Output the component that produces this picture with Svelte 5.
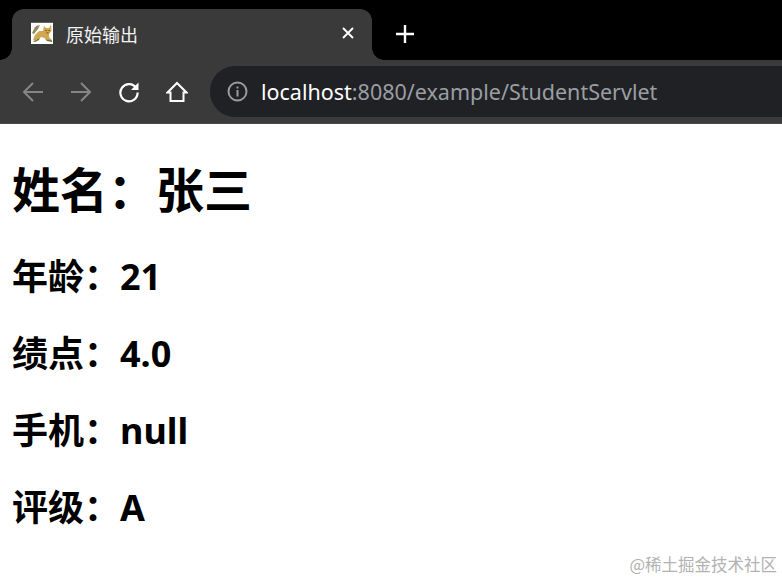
<script>
  const rows = ['年龄：21', '绩点：4.0', '手机：null', '评级：A'];
</script>

<div class="browser">
  <div class="tabstrip">
    <div class="tab">
      <svg class="favicon" width="22" height="22" viewBox="0 0 22 22">
        <rect width="22" height="22" fill="#fff" />
        <path d="M0 0 H22 V.8 H0 Z" fill="#3c3a34" />
        <path d="M2 18 L4 13 L8 9 L12 9 L13 4 L15 6 L18 6 L20 2.500 L20.500 9 L18 12 L18 15 L21 18 L20 19 L15 17 L11 15 L8 16 L4 19 Z" fill="#d3a650" />
        <path d="M1 11 L3 7 L6 4 L9 3 L7 7 L3 12 Z" fill="#86915f" />
        <path d="M3 6 L7 3 L5 7 Z" fill="#c9694a" />
        <path d="M2 20 L9 15.500 L8 18 L4 20 Z M14 17 L21 18.500 L21 20 L16 19 Z" fill="#66733c" />
        <path d="M14.500 8 h1.200 v1 h-1.200 Z M17.500 8 h1.200 v1 h-1.200 Z M15.500 10.500 h2 v.8 h-2 Z" fill="#4d3b1c" />
      </svg>
      <span class="title">原始输出</span>
      <svg class="close" width="12" height="12" viewBox="0 0 12 12">
        <path d="M1 1 L11 11 M11 1 L1 11" stroke="#fff" stroke-width="1.9" />
      </svg>
    </div>
    <svg class="plus" width="18" height="18" viewBox="0 0 18 18">
      <path d="M9 0 V18 M0 9 H18" stroke="#fff" stroke-width="2.4" />
    </svg>
  </div>
  <div class="toolbar">
    <div class="navs">
      <svg width="22" height="20" viewBox="0 0 22 20"><path d="M21 10 H2 M11 1 L2 10 L11 19" fill="none" stroke="#858687" stroke-width="2" /></svg>
      <svg width="22" height="20" viewBox="0 0 22 20"><path d="M1 10 H20 M11 1 L20 10 L11 19" fill="none" stroke="#858687" stroke-width="2" /></svg>
      <svg width="22" height="22" viewBox="0 0 22 22"><path d="M18.200 7 A8.600 8.600 0 1 0 19.600 11.500" fill="none" stroke="#fff" stroke-width="2.200" /><path d="M20.500 1.500 V9 H13 Z" fill="#fff" /></svg>
      <svg width="22" height="22" viewBox="0 0 22 22"><path d="M11 2 L20.500 11.500 H17.500 V20 H4.500 V11.500 H1.500 Z" fill="none" stroke="#fff" stroke-width="2" /></svg>
    </div>
    <div class="omnibox">
      <svg width="21" height="21" viewBox="0 0 21 21">
        <circle cx="10.500" cy="10.500" r="9" fill="none" stroke="#9a9b9d" stroke-width="2" />
        <path d="M10.500 9 V15.500 M10.500 5.500 V7.500" stroke="#9a9b9d" stroke-width="2" />
      </svg>
      <span class="url"><b>localhost</b>:8080/example/StudentServlet</span>
    </div>
  </div>
</div>

<main>
  <h1>姓名：张三</h1>
  {#each rows as row}
    <h2>{row}</h2>
  {/each}
</main>

<span class="watermark">@稀土掘金技术社区</span>

<style>
  :global(body) {
    background: #fff;
    overflow: hidden;
  }

  .browser {
    font-family: "Noto Sans", "Noto Sans CJK SC", sans-serif;
  }

  .tabstrip {
    height: 60px;
    background: #000;
    box-sizing: border-box;
    padding: 9px 0 0 12px;
    display: flex;
    align-items: flex-start;
  }

  .tab {
    width: 360px;
    height: 51px;
    box-sizing: border-box;
    padding: 0 18px 0 19px;
    background: #3a3a3a;
    border-radius: 12px 12px 0 0;
    display: flex;
    align-items: center;
    position: relative;
  }

  .tab::before,
  .tab::after {
    content: "";
    position: absolute;
    bottom: 0;
    width: 12px;
    height: 12px;
  }

  .tab::before {
    left: -12px;
    background: radial-gradient(circle at 0 0, #000 11.500px, #3a3a3a 12px);
  }

  .tab::after {
    right: -12px;
    background: radial-gradient(circle at 100% 0, #000 11.500px, #3a3a3a 12px);
  }

  .favicon {
    margin-top: -3px;
  }

  .title {
    margin-left: 13px;
    font-size: 18px;
    color: #f2f2f2;
    font-family: "Noto Sans CJK SC", sans-serif;
    flex: 1;
    margin-top: -1px;
  }

  .close {
    margin-top: -3px;
  }

  .plus {
    margin: 16px 0 0 24px;
  }

  .toolbar {
    height: 64px;
    background: #3a3a3a;
    box-sizing: border-box;
    padding: 6px 0 6px 22px;
    display: flex;
    align-items: center;
    border-bottom: 1px solid #4a4a4a;
  }

  .navs {
    display: flex;
    align-items: center;
    gap: 26px;
    width: 188px;
  }

  .omnibox {
    flex: 1;
    height: 51px;
    background: #202124;
    border-radius: 25px 0 0 25px;
    display: flex;
    align-items: center;
    padding-left: 17px;
  }

  .url {
    margin-left: 13px;
    font-size: 21.500px;
    color: #9a9ea3;
    font-family: "Noto Sans", sans-serif;
    white-space: nowrap;
  }

  .url b {
    font-weight: 400;
    color: #fff;
  }

  main {
    padding: 36px 12px 0;
    color: #000;
    font-family: "Noto Sans", "Noto Sans CJK SC", sans-serif;
  }

  h1 {
    margin: 0 0 33px;
    font-size: 48px;
    line-height: 60px;
    font-weight: 700;
    white-space: nowrap;
  }

  h2 {
    margin: 0 0 29px;
    font-size: 36px;
    line-height: 48px;
    font-weight: 700;
    white-space: nowrap;
  }

  .watermark {
    position: absolute;
    right: 5px;
    bottom: 5px;
    font-size: 16.500px;
    color: #b2b2b2;
    font-family: "Noto Sans CJK SC", sans-serif;
  }
</style>
